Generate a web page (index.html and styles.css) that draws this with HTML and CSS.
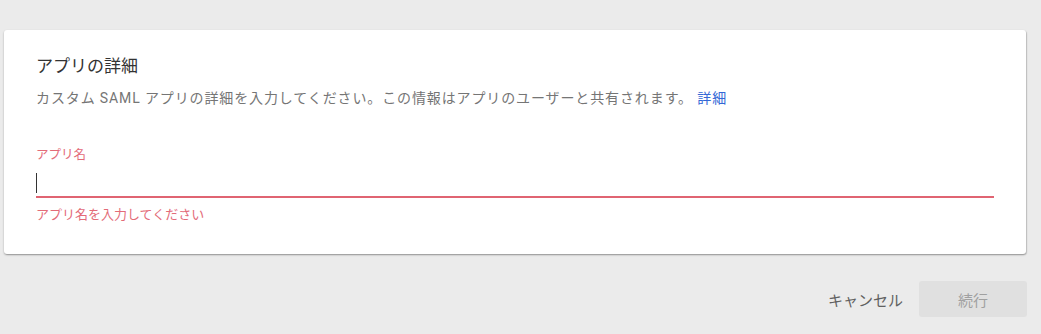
FILE: index.html
```html
<!DOCTYPE html>
<html lang="ja">
<head>
    <meta charset="UTF-8">
    <meta name="viewport" content="width=device-width, initial-scale=1.0">
    <title>アプリの詳細</title>
    <link rel="stylesheet" href="styles.css">
</head>
<body>
    <div class="page">
        <div class="card">
            <h2 class="card-title">アプリの詳細</h2>
            <p class="card-desc">カスタム SAML アプリの詳細を入力してください。この情報はアプリのユーザーと共有されます。 <a href="#" class="more-link">詳細</a></p>
            <div class="field field-error">
                <label class="field-label">アプリ名</label>
                <div class="field-input"><span class="caret"></span></div>
                <div class="field-msg">アプリ名を入力してください</div>
            </div>
        </div>
        <div class="actions">
            <button class="btn btn-flat">キャンセル</button>
            <button class="btn btn-disabled" disabled>続行</button>
        </div>
    </div>
</body>
</html>
```

FILE: styles.css
```css
body {
    margin: 0;
    background-color: #ebebeb;
    font-family: Roboto, "Noto Sans CJK JP", sans-serif;
    color: #212121;
}
.page {
    padding: 30px 15px 0 4px;
}
.card {
    background-color: #ffffff;
    border-radius: 3px;
    box-shadow: 0 1px 2px rgba(0,0,0,0.3), 1px 1px 1px rgba(0,0,0,0.12);
    padding: 24px 32px 31px 32px;
}
.card-title {
    margin: 0;
    font-size: 17px;
    font-weight: 400;
    line-height: 24px;
    color: #333333;
}
.card-desc {
    margin: 10px 0 0 0;
    font-size: 14px;
    letter-spacing: 0.88px;
    line-height: 20px;
    color: #757575;
}
.more-link {
    color: #3367d6;
    text-decoration: none;
}
.field {
    margin-top: 39px;
}
.field-label {
    display: block;
    font-size: 12.5px;
    line-height: 16px;
    color: #e36b78;
}
.field-input {
    display: flex;
    align-items: flex-end;
    height: 30px;
    padding-bottom: 3px;
    border-bottom: 2px solid #e06472;
}
.caret {
    width: 1px;
    height: 20px;
    background-color: #333333;
}
.field-msg {
    margin-top: 9px;
    font-size: 13px;
    line-height: 16px;
    color: #e36b78;
}
.actions {
    display: flex;
    justify-content: flex-end;
    align-items: center;
    gap: 8px;
    margin-top: 27px;
    margin-right: -1px;
}
.btn {
    font-family: Roboto, "Noto Sans CJK JP", sans-serif;
    font-size: 15px;
    border: none;
    border-radius: 3px;
    height: 36px;
    padding: 0 8px;
    background: none;
}
.btn-flat {
    color: #616161;
    cursor: pointer;
}
.btn-disabled {
    width: 108px;
    background-color: #e0e0e0;
    color: #a0a0a0;
}
```
